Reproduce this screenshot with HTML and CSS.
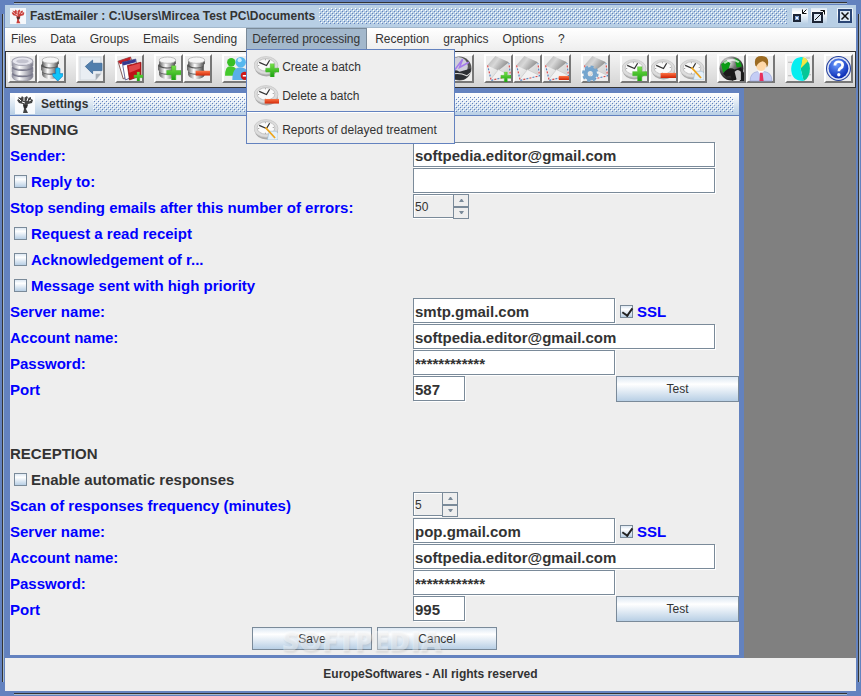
FILE: index.html
```html
<!DOCTYPE html>
<html lang="en">
<head>
    <meta charset="UTF-8">
    <title>FastEmailer</title>
    <link rel="stylesheet" href="styles.css">
</head>
<body>
    <!-- shared icon shapes -->
    <svg class="sprite" aria-hidden="true">
        <defs>
            <linearGradient id="metal" x1="0" x2="1">
                <stop offset="0" stop-color="#8d8d9c"/><stop offset=".35" stop-color="#fff"/><stop offset="1" stop-color="#777788"/>
            </linearGradient>
            <linearGradient id="steel" x1="0" x2="1">
                <stop offset="0" stop-color="#5c5c5c"/><stop offset=".4" stop-color="#fff"/><stop offset="1" stop-color="#444"/>
            </linearGradient>
            <linearGradient id="paper" x1="0" y1="0" x2="1" y2="1">
                <stop offset="0" stop-color="#fff"/><stop offset="1" stop-color="#c8c8c8"/>
            </linearGradient>
            <linearGradient id="flap" x1="0" x2="1" y2=".5">
                <stop offset="0" stop-color="#aaa"/><stop offset=".5" stop-color="#d8d8d8"/><stop offset="1" stop-color="#8c8c8c"/>
            </linearGradient>
            <linearGradient id="green" x1="0" y1="0" x2="0" y2="1">
                <stop offset="0" stop-color="#7be34a"/><stop offset="1" stop-color="#18a010"/>
            </linearGradient>
            <linearGradient id="red" x1="0" y1="0" x2="0" y2="1">
                <stop offset="0" stop-color="#ff7a4a"/><stop offset="1" stop-color="#d02405"/>
            </linearGradient>
            <radialGradient id="help" cx=".4" cy=".3" r=".7">
                <stop offset="0" stop-color="#6b9cff"/><stop offset="1" stop-color="#0a2bb4"/>
            </radialGradient>
            <radialGradient id="globe" cx=".35" cy=".25" r=".8">
                <stop offset="0" stop-color="#fff"/><stop offset=".4" stop-color="#777"/><stop offset="1" stop-color="#080808"/>
            </radialGradient>
        </defs>
        <symbol id="i-logo" viewBox="0 0 20 20">
            <rect width="20" height="20" fill="#fff" opacity=".85"/>
            <path d="M8 19l1-4-1-5-4-1-2-3 2-1-1-2 3 1 1-2 2 2 3-2 1 2 3-1v2l2 1-1 3-4 1-2 5 2 4z" fill="currentColor"/>
            <path d="M4 5l2 2M9 4v3M13 4l-1 3M16 6l-2 1M7 8l3 1" stroke="#fff" stroke-width="1"/>
            <path d="M8 11l1 3h3l1-3z" fill="#222" opacity=".65"/>
        </symbol>
        <symbol id="i-db" viewBox="0 0 24 24">
            <path d="M2 17v3q1 4 10 4t10-4v-3z" fill="url(#metal)" stroke="#8a8a98" stroke-width=".6"/>
            <ellipse cx="12" cy="17" rx="10" ry="3.500" fill="#77778a"/>
            <path d="M2 11v4q1 4 10 4t10-4v-4z" fill="url(#metal)" stroke="#8a8a98" stroke-width=".6"/>
            <ellipse cx="12" cy="11" rx="10" ry="3.500" fill="#77778a"/>
            <path d="M2 5v4q1 4 10 4t10-4V5z" fill="url(#metal)" stroke="#8a8a98" stroke-width=".6"/>
            <ellipse cx="12" cy="5" rx="10" ry="4" fill="#e6e6ee" stroke="#a5a5b2"/>
            <ellipse cx="12" cy="5" rx="6" ry="2" fill="#c4c4d0"/>
        </symbol>
        <symbol id="i-dbs" viewBox="0 0 24 24">
            <path d="M3 15v3q1 4 8 4t8-4v-3z" fill="url(#steel)"/>
            <ellipse cx="11" cy="15" rx="8" ry="3" fill="#555"/>
            <path d="M2 9v4q1 4 8 4t8-4V9z" fill="url(#steel)"/>
            <ellipse cx="10" cy="9" rx="8" ry="3" fill="#555"/>
            <path d="M3 4v3q1 4 8 4t8-4V4z" fill="url(#steel)"/>
            <ellipse cx="11" cy="4" rx="8" ry="3" fill="#f6f6f6" stroke="#aaa" stroke-width=".7"/>
        </symbol>
        <symbol id="i-plus" viewBox="0 0 14 14">
            <path d="M5 0h4v5h5v4H9v5H5V9H0V5h5z" fill="url(#green)" stroke="#3eb525" stroke-width=".5"/>
        </symbol>
        <symbol id="i-minus" viewBox="0 0 14 5" preserveAspectRatio="none">
            <path d="M0 0h14v5H0z" fill="url(#red)"/>
        </symbol>
        <symbol id="i-down" viewBox="0 0 10 13">
            <path d="M3 1q2-2 4 0v5h3v2l-5 5-5-5V6h3z" fill="#10c5f8" stroke="#1386cc" stroke-width=".8"/>
        </symbol>
        <symbol id="i-mail" viewBox="0 0 24 24">
            <path d="M1 9L9 0l13 6 2 13-19 5z" fill="url(#paper)"/>
            <path d="M1 9L9 0l13 6-10 8z" fill="url(#flap)"/>
            <path d="M4 23l8-10 12 6z" fill="#f2f2f2" stroke="#c4c4c4" stroke-width=".6"/>
            <path d="M1.500 9L5 23.500 23.500 19 22 7" fill="none" stroke="#f8f8f8" stroke-width="1.500"/>
            <path d="M1.500 9L5 23.500 23.500 19 22 7" fill="none" stroke="#d65050" stroke-width="1.200" stroke-dasharray="2 4"/>
            <path d="M1.500 9L5 23.500 23.500 19 22 7" fill="none" stroke="#5a86bd" stroke-width="1.200" stroke-dasharray="2 4" stroke-dashoffset="3"/>
        </symbol>
        <symbol id="i-clock" viewBox="0 0 24 22">
            <ellipse cx="12" cy="12.500" rx="11" ry="8" fill="#aaa"/>
            <ellipse cx="11.500" cy="10" rx="11.500" ry="8.500" fill="#dcdcdc" stroke="#c4c4c4" stroke-width=".7"/>
            <ellipse cx="11.500" cy="9.500" rx="8.500" ry="6" fill="#fafafa" stroke="#b4b4b4" stroke-width=".7"/>
            <path d="M5 7l7 3 3-5" fill="none" stroke="#333" stroke-width="1.200"/>
            <path d="M11 4v1M18 9h1M11 14v1M4 10h1" stroke="#999"/>
        </symbol>
        <symbol id="i-pencil" viewBox="0 0 14 14">
            <path d="M5 5h7l2 2v7H3z" fill="#e4f0fa" stroke="#9bbad1" stroke-width=".6"/>
            <path d="M1 1l10 11" stroke="#eda51e" stroke-width="1.800"/>
        </symbol>
        <symbol id="i-users" viewBox="0 0 24 24">
            <circle cx="7" cy="6" r="4" fill="#38bf25"/><path d="M1 19q0-10 6-9 6 0 6 9z" fill="#45c92c"/>
            <circle cx="16" cy="6" r="5" fill="#57b8ee"/><path d="M8 23q0-13 8-12 8 0 8 12z" fill="#5aafe8"/>
            <circle cx="15" cy="4" r="2" fill="#c6edff"/>
            <circle cx="20" cy="19" r="4" fill="#d01818"/><path d="M18 19h4" stroke="#fff" stroke-width="1.500"/>
        </symbol>
        <symbol id="i-sphere" viewBox="0 0 24 24">
            <circle cx="12" cy="12" r="11.500" fill="#555"/>
            <circle cx="11" cy="10" r="9" fill="#cfcfda"/>
            <path d="M1 15q7-3 11 0l11-3q-1 11-11 11-9-1-11-8z" fill="#2c2f34"/>
            <path d="M7 14l8-11-3 8 9-5" fill="none" stroke="#a47bea" stroke-width="1.500"/>
            <path d="M3 18q8-3 16 1l4-3" stroke="#ddd" fill="none"/>
        </symbol>
    </svg>

    <div class="window">
        <header class="title-bar">
            <svg class="app-icon"><use href="#i-logo"/></svg>
            <h1>FastEmailer : C:\Users\Mircea Test PC\Documents</h1>
            <div class="grip"></div>
            <div class="window-controls">
                <button type="button" aria-label="Minimize">
                    <svg viewBox="0 0 16 16"><path d="M2 7h6v6H2z" fill="#eef4fb" stroke="#1c2536" stroke-width="2"/><path d="M3.500 8.500h3v3h-3z" fill="none" stroke="#7396cb"/><path d="M14.500 1.500l-4 4M10.500 1.500v4h4" fill="none" stroke="#111"/></svg>
                </button>
                <button type="button" aria-label="Maximize">
                    <svg viewBox="0 0 16 16"><path d="M2 5h9v9H2z" fill="#dce8f5" stroke="#1c2536" stroke-width="2"/><path d="M4 12L13.500 2.500M9.500 2.500h4v4" fill="none" stroke="#111"/></svg>
                </button>
                <button type="button" class="close" aria-label="Close">
                    <svg viewBox="0 0 16 16"><path d="M2 2h12v12H2z" fill="#dce8f5" stroke="#2b4675" stroke-width="2"/><path d="M4.500 4.500l7 7M11.500 4.500l-7 7" stroke="#111" stroke-width="1.500"/></svg>
                </button>
            </div>
        </header>

        <nav class="menu-bar">
            <button type="button">Files</button>
            <button type="button">Data</button>
            <button type="button">Groups</button>
            <button type="button">Emails</button>
            <button type="button">Sending</button>
            <div class="menu">
                <button type="button" class="active" aria-expanded="true">Deferred processing</button>
                <div class="popup">
                    <button type="button"><svg viewBox="0 0 24 22"><use href="#i-clock" width="24" height="22"/><use href="#i-plus" x="11" y="8" width="13" height="13"/></svg>Create a batch</button>
                    <button type="button"><svg viewBox="0 0 24 22"><use href="#i-clock" width="24" height="22"/><use href="#i-minus" x="10" y="14" width="14" height="5"/></svg>Delete a batch</button>
                    <hr>
                    <button type="button"><svg viewBox="0 0 24 22"><use href="#i-clock" width="24" height="22"/><use href="#i-pencil" x="10" y="8" width="13" height="13"/></svg>Reports of delayed treatment</button>
                </div>
            </div>
            <button type="button">Reception</button>
            <button type="button">graphics</button>
            <button type="button">Options</button>
            <button type="button">?</button>
        </nav>

        <div class="toolbar">
            <div class="tool-group">
                <button type="button" aria-label="Database"><svg viewBox="0 0 24 24"><use href="#i-db"/></svg></button>
                <button type="button" aria-label="Import data"><svg viewBox="0 0 24 24"><use href="#i-dbs"/><use href="#i-down" x="13" y="11" width="10" height="13"/></svg></button>
            </div>
            <div class="tool-group">
                <button type="button" aria-label="Back"><svg viewBox="0 0 24 24"><path d="M2 1h20v16l-5 6H2z" fill="#e9eef3" stroke="#d3d9e0"/><path d="M17 23v-6h5z" fill="#a5adb5"/><path d="M7 10l7-6v3h9v7h-9v3z" fill="#517fad" stroke="#416d9b" stroke-width=".8"/></svg></button>
            </div>
            <div class="tool-group">
                <button type="button" aria-label="Groups"><svg viewBox="0 0 24 24"><path d="M1 5l12-4 4 14-11 7z" fill="#fff" stroke="#5c2727" stroke-width=".7"/><path d="M1 5l12-4v3L3 8z" fill="#c51e25"/><path d="M5 6l13-3 2 15-12 5z" fill="#fff" stroke="#303475" stroke-width=".7"/><path d="M5 6l13-3v3L6 9z" fill="#343990"/><path d="M10 9l13-3v13l-11 4z" fill="#c01218" stroke="#811" stroke-width=".7"/><path d="M11 10l11-3v5l-10 4z" fill="#df474a"/><use href="#i-plus" x="16" y="15" width="9" height="9"/></svg></button>
            </div>
            <div class="tool-group">
                <button type="button" aria-label="Add data"><svg viewBox="0 0 24 24"><use href="#i-dbs"/><use href="#i-plus" x="10" y="9" width="14" height="14"/></svg></button>
                <button type="button" aria-label="Remove data"><svg viewBox="0 0 24 24"><use href="#i-dbs"/><use href="#i-minus" x="10" y="14" width="14" height="5"/></svg></button>
            </div>
            <div class="tool-group">
                <button type="button" aria-label="Remove contacts"><svg viewBox="0 0 24 24"><use href="#i-users"/></svg></button>
                <button type="button" aria-label="Add contacts"><svg viewBox="0 0 24 24"><use href="#i-users"/></svg></button>
                <button type="button" aria-label="Contacts"><svg viewBox="0 0 24 24"><use href="#i-users"/></svg></button>
            </div>
            <div class="tool-group">
                <button type="button" aria-label="New email"><svg viewBox="0 0 24 24"><use href="#i-mail"/></svg></button>
                <button type="button" aria-label="Edit email"><svg viewBox="0 0 24 24"><use href="#i-mail"/></svg></button>
            </div>
            <div class="tool-group">
                <button type="button" aria-label="Send"><svg viewBox="0 0 24 24"><use href="#i-sphere"/></svg></button>
                <button type="button" aria-label="Send all"><svg viewBox="0 0 24 24"><use href="#i-sphere"/></svg></button>
                <button type="button" aria-label="Send test"><svg viewBox="0 0 24 24"><use href="#i-sphere"/></svg></button>
            </div>
            <div class="tool-group">
                <button type="button" aria-label="Add message"><svg viewBox="0 0 24 24"><use href="#i-mail"/><use href="#i-plus" x="14" y="15" width="10" height="10"/></svg></button>
                <button type="button" aria-label="Message"><svg viewBox="0 0 24 24"><use href="#i-mail"/></svg></button>
                <button type="button" aria-label="Delete message"><svg viewBox="0 0 24 24"><use href="#i-mail"/><use href="#i-minus" x="14" y="19" width="10" height="4"/></svg></button>
            </div>
            <div class="tool-group">
                <button type="button" aria-label="Message settings"><svg viewBox="0 0 24 24"><use href="#i-mail"/><circle cx="7" cy="17" r="4.500" fill="none" stroke="#75a5ce" stroke-width="4"/><circle cx="7" cy="17" r="7" fill="none" stroke="#75a5ce" stroke-width="2" stroke-dasharray="3 2.500"/></svg></button>
            </div>
            <div class="tool-group">
                <button type="button" aria-label="Create a batch"><svg viewBox="0 0 24 24"><use href="#i-clock" y="2" width="24" height="22"/><use href="#i-plus" x="10" y="10" width="14" height="14"/></svg></button>
                <button type="button" aria-label="Delete a batch"><svg viewBox="0 0 24 24"><use href="#i-clock" y="2" width="24" height="22"/><use href="#i-minus" x="9" y="16" width="15" height="5"/></svg></button>
                <button type="button" aria-label="Reports"><svg viewBox="0 0 24 24"><use href="#i-clock" y="2" width="24" height="22"/><use href="#i-pencil" x="10" y="10" width="13" height="13"/></svg></button>
            </div>
            <div class="tool-group">
                <button type="button" aria-label="Reception"><svg viewBox="0 0 24 24"><circle cx="12" cy="12" r="11.500" fill="url(#globe)"/><path d="M2 8l5-4 4 3-2 6-5 3zM15 2q6 2 7 8l-5 1z" fill="#0c9c16"/><path d="M5 7q7-6 14-1" fill="none" stroke="#fff" stroke-width="2" opacity=".7"/><path d="M4 17q5-8 11-4l6-2 3 5v8h-4v-5l-4 2-3 3-2-5-4 1z" fill="#1b1b1b"/><path d="M15 15q3-3 6 0v8h-4z" fill="#c9c9c9"/></svg></button>
                <button type="button" aria-label="User"><svg viewBox="0 0 24 24"><path d="M2 24q0-8 7-9h7q7 1 7 9z" fill="#c4cdf5" stroke="#9ba7d9" stroke-width=".7"/><path d="M9 14l3 4 4-4z" fill="#fff"/><path d="M11.500 16h2.500l1 8h-4z" fill="#e8305c"/><ellipse cx="12.500" cy="8.500" rx="5" ry="6" fill="#ffd8a8"/><path d="M7 9Q5 0 13 0t6 9l-1 2q0-5-4-6-4 1-6 5z" fill="#9c6b22"/></svg></button>
            </div>
            <div class="tool-group">
                <button type="button" aria-label="Charts"><svg viewBox="0 0 24 24"><path d="M13 12V1q9 1 9 11 0 9-6 12z" fill="#06c797"/><path d="M13 12L15 1q4 1 5 4z" fill="#f2e645"/><path d="M13 12l3 12Q4 24 4 12 5 1 15 1z" fill="#06eef0"/><path d="M1 6h4M18 2h4M21 18h2M1 19h3" stroke="#b9b9b9"/></svg></button>
            </div>
            <div class="tool-group">
                <button type="button" aria-label="Help"><svg viewBox="0 0 24 24"><circle cx="12" cy="12" r="11.500" fill="#dfe5f5" stroke="#243f9c"/><circle cx="12" cy="12" r="9.500" fill="url(#help)"/><path d="M8.500 9q0-3.500 3.700-3.500T16 8.700q0 2-2 3-1.700 1-1.700 3" fill="none" stroke="#fff" stroke-width="2.600"/><circle cx="12.300" cy="18" r="1.600" fill="#fff"/></svg></button>
            </div>
        </div>

        <main class="desktop">
            <section class="frame">
                <div class="frame-title">
                    <svg class="frame-icon"><use href="#i-logo"/></svg>
                    <h2>Settings</h2>
                    <div class="grip"></div>
                </div>

                <form class="settings">
                    <h3>SENDING</h3>
                    <div class="row">
                        <label for="sender">Sender:</label>
                        <input class="field wide" id="sender" type="text" value="softpedia.editor@gmail.com">
                    </div>
                    <div class="row">
                        <label class="check"><input type="checkbox">Reply to:</label>
                        <input class="field wide" type="text" aria-label="Reply address">
                    </div>
                    <div class="row">
                        <label for="errors">Stop sending emails after this number of errors:</label>
                        <div class="spinner">
                            <input id="errors" type="text" value="50" size="4">
                            <div class="arrows">
                                <button type="button" aria-label="More"><svg viewBox="0 0 5 3"><path d="M0 3h5L3 0H2z"/></svg></button>
                                <button type="button" aria-label="Less"><svg viewBox="0 0 5 3"><path d="M0 0h5L3 3H2z"/></svg></button>
                            </div>
                        </div>
                    </div>
                    <div class="row">
                        <label class="check"><input type="checkbox">Request a read receipt</label>
                    </div>
                    <div class="row">
                        <label class="check"><input type="checkbox">Acknowledgement of r...</label>
                    </div>
                    <div class="row">
                        <label class="check"><input type="checkbox">Message sent with high priority</label>
                    </div>
                    <div class="row">
                        <label for="smtp">Server name:</label>
                        <input class="field" id="smtp" type="text" value="smtp.gmail.com">
                        <label class="check ssl"><input type="checkbox" checked>SSL</label>
                    </div>
                    <div class="row">
                        <label for="smtp-account">Account name:</label>
                        <input class="field wide" id="smtp-account" type="text" value="softpedia.editor@gmail.com">
                    </div>
                    <div class="row">
                        <label for="smtp-password">Password:</label>
                        <input class="field" id="smtp-password" type="text" value="************">
                    </div>
                    <div class="row">
                        <label for="smtp-port">Port</label>
                        <input class="field port" id="smtp-port" type="text" value="587">
                        <button type="button" class="btn test">Test</button>
                    </div>

                    <h3 class="next">RECEPTION</h3>
                    <div class="row">
                        <label class="check dark"><input type="checkbox">Enable automatic responses</label>
                    </div>
                    <div class="row">
                        <label for="scan">Scan of responses frequency (minutes)</label>
                        <div class="spinner short">
                            <input id="scan" type="text" value="5" size="3">
                            <div class="arrows">
                                <button type="button" aria-label="More"><svg viewBox="0 0 5 3"><path d="M0 3h5L3 0H2z"/></svg></button>
                                <button type="button" aria-label="Less"><svg viewBox="0 0 5 3"><path d="M0 0h5L3 3H2z"/></svg></button>
                            </div>
                        </div>
                    </div>
                    <div class="row">
                        <label for="pop">Server name:</label>
                        <input class="field" id="pop" type="text" value="pop.gmail.com">
                        <label class="check ssl"><input type="checkbox" checked>SSL</label>
                    </div>
                    <div class="row">
                        <label for="pop-account">Account name:</label>
                        <input class="field wide" id="pop-account" type="text" value="softpedia.editor@gmail.com">
                    </div>
                    <div class="row">
                        <label for="pop-password">Password:</label>
                        <input class="field" id="pop-password" type="text" value="************">
                    </div>
                    <div class="row">
                        <label for="pop-port">Port</label>
                        <input class="field port" id="pop-port" type="text" value="995">
                        <button type="button" class="btn test">Test</button>
                    </div>

                    <div class="actions">
                        <button type="button" class="btn">Save</button>
                        <button type="button" class="btn">Cancel</button>
                        <div class="watermark">SOFTPEDIA<sup>®</sup></div>
                    </div>
                </form>
            </section>
        </main>

        <footer>EuropeSoftwares - All rights reserved</footer>
    </div>
</body>
</html>
```

FILE: styles.css
```css
* {
    box-sizing: border-box;
}

body {
    margin: 0;
    font-family: "Liberation Sans", Arial, sans-serif;
    font-size: 12px;
    color: #333;
}

h1, h2, h3 {
    margin: 0;
    font-size: 12px;
}

button, input {
    font: inherit;
    color: inherit;
    margin: 0;
    padding: 0;
    border: 0;
    border-radius: 0;
    background: none;
}

svg {
    display: block;
}

.sprite {
    position: absolute;
    width: 0;
    height: 0;
}

/* Window border */
.window {
    position: relative;
    display: flex;
    flex-direction: column;
    min-height: 100vh;
    padding: 5px;
    background: #6382bf;
}

.window::before,
.window::after {
    content: "";
    position: absolute;
    border: 0 solid #333;
    pointer-events: none;
}

.window::before {
    inset: 2px 14px;
    border-width: 1px 0;
    box-shadow: 0 1px #a3b8cc, inset 0 1px #a3b8cc;
}

.window::after {
    inset: 14px 2px;
    border-width: 0 1px;
    box-shadow: 1px 0 #a3b8cc, inset 1px 0 #a3b8cc;
}

.title-bar {
    display: flex;
    align-items: center;
    height: 23px;
    padding: 0 3px 0 5px;
    background: #b8cfe5;
    border-bottom: 1px solid #a3b8cc;
}

.title-bar h1 {
    margin: 0 4px;
    white-space: nowrap;
}

.app-icon {
    width: 16px;
    height: 16px;
    color: #c9403c;
}

.grip {
    flex: 1;
    height: 16px;
    background-image:
        conic-gradient(at 1px 1px, transparent 75%, #6382bf 0),
        conic-gradient(at 1px 1px, transparent 75%, #6382bf 0),
        conic-gradient(at 1px 1px, transparent 75%, #fff 0),
        conic-gradient(at 1px 1px, transparent 75%, #fff 0);
    background-size: 4px 4px;
    background-position: 1px 1px, 3px 3px, 0 0, 2px 2px;
}

.window-controls {
    display: flex;
    gap: 3px;
    padding-left: 5px;
}

.window-controls button {
    background: linear-gradient(#dde8f3, #fff 30%, #b8cfe5);
}

.window-controls svg {
    width: 16px;
    height: 16px;
}

.window-controls .close {
    margin-left: 7px;
}

/* Menus */
.menu-bar {
    display: flex;
    gap: 2px;
    height: 23px;
    background: linear-gradient(#fff, #eee);
}

.menu-bar button {
    height: 22px;
    padding: 0 6px;
}

.menu {
    position: relative;
    margin-left: 1px;
}

.menu-bar .active {
    padding: 0 6px 2px 5px;
    border: 1px solid #7a8a99;
    border-bottom: 0;
    background: #a3b8cc;
}

.popup {
    position: absolute;
    z-index: 2;
    top: 21px;
    left: 0;
    padding-top: 1px;
    border: 1px solid #6382bf;
    background: #eee;
}

.menu-bar .popup button {
    display: flex;
    align-items: center;
    gap: 3px;
    width: 100%;
    height: 29px;
    padding: 2px 17px 0 7px;
    white-space: nowrap;
}

.popup svg {
    width: 25px;
    height: 23px;
}

.popup hr {
    margin: 2px 0 1px;
    border: 0;
    border-top: 1px solid #6382bf;
    border-bottom: 1px solid #fff;
}

/* Toolbar */
.toolbar {
    display: flex;
    gap: 10px;
    height: 37px;
    padding: 2px;
    border: 1px solid #333;
    background: linear-gradient(#f6f6f6, #d4d4d4);
    overflow: hidden;
}

.tool-group {
    display: flex;
}

.toolbar button {
    width: 29px;
    height: 29px;
    border: 2px solid;
    border-color: #fff #777 #777 #fff;
    background: #eee;
}

.toolbar svg {
    width: 25px;
    height: 25px;
    overflow: visible;
}

/* Desktop and inner frame */
.desktop {
    display: flex;
    flex: 1;
    background: #808080;
}

.frame {
    border: 5px solid #6382bf;
    border-bottom-width: 3px;
    background: #eee;
}

.frame-title {
    display: flex;
    align-items: center;
    height: 23px;
    padding: 0 5px;
    border-bottom: 1px solid #6382bf;
    background: linear-gradient(#fff, #b8cfe5);
}

.frame-title h2 {
    margin: 0 5px 0 6px;
}

.frame-icon {
    width: 20px;
    height: 20px;
    color: #444;
}

.settings {
    padding-bottom: 5px;
    font-size: 15px;
    font-weight: bold;
}

.settings h3 {
    height: 26px;
    padding-top: 2px;
    font-size: 15px;
    line-height: 24px;
}

.settings .next {
    margin-top: 38px;
}

.row {
    display: grid;
    grid-template-columns: 403px 202px 124px;
    height: 26px;
}

.row label {
    padding-top: 2px;
    line-height: 24px;
    color: #00f;
}

.row .check {
    display: flex;
    align-items: center;
    gap: 4px;
    padding-left: 4px;
}

.row .ssl {
    padding-left: 5px;
}

.row .dark {
    color: #333;
}

.check input {
    appearance: none;
    width: 13px;
    height: 13px;
    margin-bottom: 2px;
    border: 1px solid #7a8a99;
    background: linear-gradient(#dde8f3, #fff 30%, #b8cfe5);
}

.check input:checked::before {
    content: "";
    display: block;
    width: 5px;
    height: 8px;
    margin-left: 3px;
    border: solid #222;
    border-width: 0 2px 2px 0;
    transform: rotate(35deg);
}

.field {
    width: 202px;
    height: 25px;
    padding: 1px 1px 0;
    border: 1px solid #7a8a99;
    background: #fff;
    box-shadow: 1px 1px #fff;
}

.wide {
    grid-column: span 2;
    width: 302px;
}

.port {
    width: 52px;
}

.spinner {
    display: flex;
    width: 56px;
    height: 25px;
    font-size: 12px;
    font-weight: normal;
}

.short {
    width: 45px;
}

.spinner input {
    flex: 1;
    min-width: 0;
    height: 24px;
    padding: 2px 0 0 1px;
    border: 1px solid #7a8a99;
    border-right: 0;
    box-shadow: inset 1px 1px #fff, 0 1px #fff;
}

.arrows {
    display: flex;
    flex-direction: column;
    width: 16px;
}

.arrows button {
    display: flex;
    flex: 1;
    align-items: center;
    justify-content: center;
    border: 1px solid #7a8a99;
}

.arrows svg {
    width: 5px;
    height: 3px;
    fill: #7a8a99;
}

.btn {
    width: 120px;
    height: 23px;
    border: 1px solid #7a8a99;
    background: linear-gradient(#dde8f3, #fff 30%, #b8cfe5);
    font-size: 12px;
    font-weight: normal;
}

.test {
    width: 123px;
    height: 26px;
    margin-left: 1px;
}

.actions {
    position: relative;
    display: flex;
    justify-content: center;
    gap: 5px;
    padding-top: 5px;
}

.watermark {
    position: absolute;
    top: 0;
    left: 272px;
    font: 800 29px/36px "Open Sans", sans-serif;
    color: rgba(255, 255, 255, 0.4);
    text-shadow: 1px 2px 2px rgba(0, 0, 0, 0.08);
    pointer-events: none;
}

.watermark sup {
    font-size: 9px;
    line-height: 0;
    vertical-align: 12px;
}

footer {
    height: 33px;
    background: #eee;
    text-align: center;
    font-weight: bold;
    line-height: 33px;
}
```
